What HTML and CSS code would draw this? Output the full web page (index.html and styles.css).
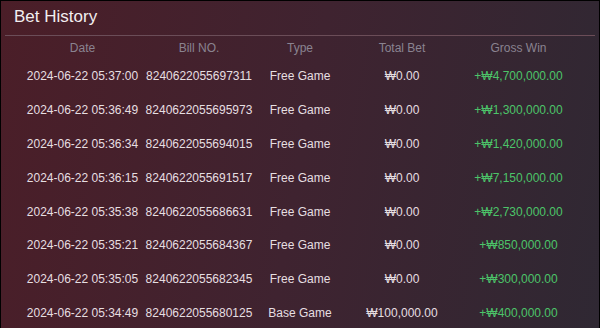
FILE: index.html
```html
<!DOCTYPE html>
<html>
<head>
<meta charset="utf-8">
<link rel="stylesheet" href="styles.css">
</head>
<body>
<div class="panel">
  <h1 class="title">Bet History</h1>
  <div class="divider"></div>
  <div class="table">
    <div class="row head">
      <div>Date</div><div>Bill NO.</div><div>Type</div><div>Total Bet</div><div>Gross Win</div>
    </div>
    <div class="row"><div>2024-06-22 05:37:00</div><div>8240622055697311</div><div>Free Game</div><div>₩0.00</div><div class="win">+₩4,700,000.00</div></div>
    <div class="row"><div>2024-06-22 05:36:49</div><div>8240622055695973</div><div>Free Game</div><div>₩0.00</div><div class="win">+₩1,300,000.00</div></div>
    <div class="row"><div>2024-06-22 05:36:34</div><div>8240622055694015</div><div>Free Game</div><div>₩0.00</div><div class="win">+₩1,420,000.00</div></div>
    <div class="row"><div>2024-06-22 05:36:15</div><div>8240622055691517</div><div>Free Game</div><div>₩0.00</div><div class="win">+₩7,150,000.00</div></div>
    <div class="row"><div>2024-06-22 05:35:38</div><div>8240622055686631</div><div>Free Game</div><div>₩0.00</div><div class="win">+₩2,730,000.00</div></div>
    <div class="row"><div>2024-06-22 05:35:21</div><div>8240622055684367</div><div>Free Game</div><div>₩0.00</div><div class="win">+₩850,000.00</div></div>
    <div class="row"><div>2024-06-22 05:35:05</div><div>8240622055682345</div><div>Free Game</div><div>₩0.00</div><div class="win">+₩300,000.00</div></div>
    <div class="row"><div>2024-06-22 05:34:49</div><div>8240622055680125</div><div>Base Game</div><div>₩100,000.00</div><div class="win">+₩400,000.00</div></div>
  </div>
</div>
</body>
</html>
```
FILE: styles.css
```css
html, body {
  margin: 0;
  padding: 0;
  background: #000;
  height: 100%;
  overflow: hidden;
}
body {
  padding: 1px 1px 0 1px;
  box-sizing: border-box;
}
.panel {
  height: 100%;
  overflow: hidden;
  background: linear-gradient(100deg, #4b1e28 0%, #3f2330 50%, #2f2833 100%);
  font-family: "Liberation Sans", Arial, sans-serif;
  color: #e6dfe1;
}
.title {
  margin: 0;
  padding: 5px 0 0 13px;
  height: 29px;
  box-sizing: border-box;
  font-size: 17px;
  font-weight: normal;
  line-height: 22px;
  color: #f2eef0;
}
.divider {
  height: 1px;
  background: #6b4d58;
  margin: 5px 4px 0 4px;
}
.table {
  display: flex;
  flex-direction: column;
}
.row {
  display: grid;
  grid-template-columns: 119px 114px 88px 116px 117px;
  padding-left: 22px;
  height: 33.9px;
  flex-shrink: 0;
  align-items: center;
  font-size: 12px;
}
.row > div {
  text-align: center;
  white-space: nowrap;
}
.row.head {
  height: 23px;
  color: #8a8390;
}
.win {
  color: #4cc469;
}
```
